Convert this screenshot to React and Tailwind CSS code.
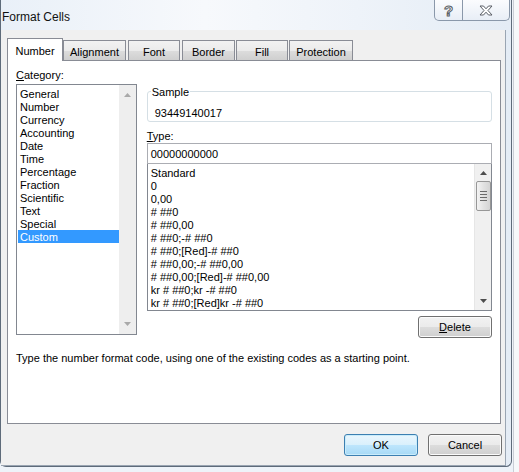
import React from "react";

const categories = [
  "General",
  "Number",
  "Currency",
  "Accounting",
  "Date",
  "Time",
  "Percentage",
  "Fraction",
  "Scientific",
  "Text",
  "Special",
  "Custom",
];

const formats = [
  "Standard",
  "0",
  "0,00",
  "# ##0",
  "# ##0,00",
  "# ##0;-# ##0",
  "# ##0;[Red]-# ##0",
  "# ##0,00;-# ##0,00",
  "# ##0,00;[Red]-# ##0,00",
  "kr # ##0;kr -# ##0",
  "kr # ##0;[Red]kr -# ##0",
];

const tabs = [
  { text: "Alignment", cls: "w-[63px]" },
  { text: "Font", cls: "w-[52px] ml-[2px]" },
  { text: "Border", cls: "w-[53px] ml-[2px]" },
  { text: "Fill", cls: "w-[52px] ml-[1px]" },
  { text: "Protection", cls: "w-[64px] ml-[1px]" },
];

function Arrow({ up, dark }) {
  return (
    <svg width="7" height="4" viewBox="0 0 7 4">
      <path
        d={up ? "M0 4 L3.5 0 L7 4 Z" : "M0 0 L7 0 L3.5 4 Z"}
        fill={dark ? "#4d4d4d" : "#a9a9a9"}
      />
    </svg>
  );
}

function Button({ children, primary, className = "" }) {
  return (
    <div
      className={`h-[22px] w-[74px] rounded-[3px] border flex items-center justify-center text-[11px] leading-[15px] text-black ${
        primary
          ? "border-[#3c7fb1] bg-[linear-gradient(#eaf6fd,#d9f0fc_50%,#bee6fd_50%,#a7d9f5)] shadow-[inset_0_0_0_1px_#c9ecfb]"
          : "border-[#707070] bg-[linear-gradient(#f2f2f2,#ebebeb_50%,#dddddd_50%,#cfcfcf)] shadow-[inset_0_0_0_1px_#fbfbfb]"
      } ${className}`}
    >
      {children}
    </div>
  );
}

export default function App() {
  return (
    <div className="w-[519px] h-[472px] overflow-hidden bg-[#eef3f9] font-['Liberation_Sans',Arial,sans-serif] text-black relative">
      {/* excel grid peeking out at the right */}
      <div className="absolute right-0 top-0 w-[6px] h-full bg-[#f6f8fa] border-l border-[#c9ced6]" />

      {/* WINDOW */}
      <div className="relative w-[512px] h-[467px] flex flex-col border-r border-b border-l border-[#5e6b7a] rounded-br-[6px] rounded-bl-[6px] bg-[linear-gradient(90deg,#e9f0f8,#f7f9fc_40%,#eef3f9_70%,#e4ecf5)]">
        {/* TITLE BAR */}
        <div className="h-[30px] flex justify-between">
          <div className="pl-[1px] pt-[10px] text-[12px] leading-[14px] text-[#111]">
            Format Cells
          </div>

          <div className="flex h-[21px] mr-[1px] rounded-b-[5px] border border-t-0 border-[#8a98aa] bg-[linear-gradient(#fbfcfe,#e8eef6)] overflow-hidden">
            <div className="w-[28px] flex items-center justify-center border-r border-[#8a98aa] text-[15px] font-bold leading-none text-white [-webkit-text-stroke:1px_#5a5f66]">
              ?
            </div>
            <div className="w-[46px] flex items-center justify-center">
              <svg width="14" height="11" viewBox="0 0 14 11">
                <path
                  d="M1 1 H4.5 L7 3.8 L9.5 1 H13 L9 5.5 L13 10 H9.5 L7 7.2 L4.5 10 H1 L5 5.5 Z"
                  fill="#fff"
                  stroke="#5a5f66"
                  strokeWidth="1"
                  strokeLinejoin="round"
                />
              </svg>
            </div>
          </div>
        </div>

        {/* CLIENT AREA */}
        <div className="flex-1 mr-[5px] bg-[#f0f0f0] border-r border-b border-[#9aa5b2] pl-[6px] pt-[8px]">
          {/* TABS */}
          <div className="flex items-end h-[22px] text-[11px] leading-[13px]">
            <div className="relative z-10 w-[56px] h-[23px] -mb-px bg-white border border-b-0 border-[#898c95] flex items-start justify-center pt-[6px]">
              Number
            </div>
            {tabs.map((t) => (
              <div
                key={t.text}
                className={`h-[20px] border border-b-0 border-[#898c95] bg-[linear-gradient(#f2f2f2,#ebebeb_50%,#dddddd_50%,#cfcfcf)] flex items-start justify-center pt-[5px] ${t.cls}`}
              >
                {t.text}
              </div>
            ))}
          </div>

          {/* PANEL */}
          <div className="w-[494px] h-[364px] bg-white border border-[#898c95] px-[8px] text-[11px] leading-[13px]">
            <div className="flex gap-[10px]">
              {/* CATEGORY */}
              <div className="w-[121px] pt-[8px]">
                <div className="h-[13px]">
                  <u>C</u>ategory:
                </div>
                <div className="mt-[2px] h-[251px] border border-[#828790] flex">
                  <div className="flex-1 pt-[2px] pl-[1px]">
                    {categories.map((c) => (
                      <div
                        key={c}
                        className={`h-[13px] leading-[15px] pl-[2px] ${
                          c === "Custom" ? "bg-[#3399ff] text-white" : ""
                        }`}
                      >
                        {c}
                      </div>
                    ))}
                  </div>
                  <div className="w-[17px] bg-[#eeeeee] flex flex-col items-center justify-between py-[8px]">
                    <Arrow up />
                    <Arrow />
                  </div>
                </div>
              </div>

              {/* RIGHT SIDE */}
              <div className="w-[346px] pt-[30px]">
                <div className="relative h-[31px] border border-[#d5dfe5] rounded-[3px] pl-[7px] pt-[15px]">
                  <div className="absolute left-[3px] -top-[6px] bg-white px-[1px]">
                    Sample
                  </div>
                  93449140017
                </div>

                <div className="mt-[6px] h-[13px] leading-[17px]">
                  <u>T</u>ype:
                </div>
                <div className="mt-[2px] h-[21px] border border-[#abadb3] pl-[3px] pt-[4px]">
                  00000000000
                </div>
                <div className="h-[147px] border border-t-0 border-[#828790] flex">
                  <div className="flex-1 pt-[2px] pl-[3px] whitespace-pre">
                    {formats.map((f) => (
                      <div key={f} className="h-[13px] leading-[15px]">
                        {f}
                      </div>
                    ))}
                  </div>
                  <div className="w-[17px] bg-[#f0f0f0] border-l border-[#e6e6e6] flex flex-col items-center py-[7px]">
                    <Arrow up dark />
                    <div className="mt-[6px] w-[15px] h-[30px] rounded-[2px] border border-[#979797] bg-[linear-gradient(90deg,#f3f3f3,#e2e2e2_50%,#d4d4d4)] flex flex-col items-center justify-center gap-[2px]">
                      <div className="w-[7px] h-px bg-[#6b6b6b]" />
                      <div className="w-[7px] h-px bg-[#6b6b6b]" />
                      <div className="w-[7px] h-px bg-[#6b6b6b]" />
                      <div className="w-[7px] h-px bg-[#6b6b6b]" />
                    </div>
                    <div className="flex-1" />
                    <Arrow dark />
                  </div>
                </div>

                <div className="flex justify-end mt-[5px]">
                  <Button>
                    <span>
                      <u>D</u>elete
                    </span>
                  </Button>
                </div>
              </div>
            </div>

            <div className="mt-[14px]">
              Type the number format code, using one of the existing codes as a
              starting point.
            </div>
          </div>

          {/* FOOTER BUTTONS */}
          <div className="flex justify-end gap-[10px] mt-[10px] w-[495px]">
            <Button primary>OK</Button>
            <Button>Cancel</Button>
          </div>
        </div>
      </div>
    </div>
  );
}
